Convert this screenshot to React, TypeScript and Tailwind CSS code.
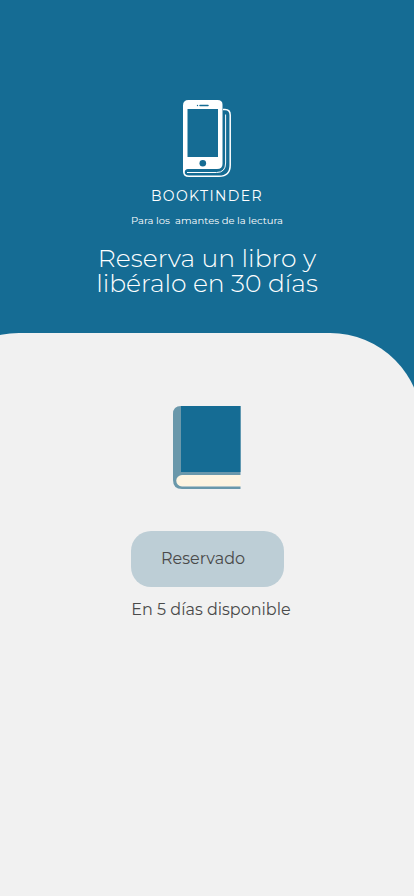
function PhoneBookLogo() {
  return (
    <svg className="h-20 w-12" viewBox="0 0 48 80" fill="none" aria-hidden="true">
      <path d="M40 9.500H42Q47.200 9.500 47.200 15V65Q47.200 76.300 36 76.300H6Q.8 76.300 .8 71.500" stroke="#fff" strokeWidth="1.500" />
      <path d="M42.600 14.500V63Q42.600 72.500 33.500 72.500H4" stroke="#fff" strokeWidth="1" />
      <path fillRule="evenodd" fill="#fff" d="M5.500 0H34.500Q39.500 0 39.500 4.500V64Q39.500 69 34 69H5Q1.800 69 1.600 72.500H0V5.500Q0 0 5.500 0ZM4.500 9V57H35V9Z" />
      <path d="M17 5.500H25" stroke="#156c94" strokeWidth="1.500" strokeLinecap="round" />
      <circle cx="14.500" cy="5.500" r=".7" fill="#156c94" />
      <circle cx="19.800" cy="63.200" r="3.300" fill="#156c94" />
    </svg>
  );
}

function BookIcon() {
  return (
    <svg className="h-[83px] w-[68px]" viewBox="0 0 68 83" fill="none" aria-hidden="true">
      <path d="M8 0H67.500V69H9V83Q0 83 0 74V8Q0 0 8 0Z" fill="#6a98ab" />
      <path d="M8 0H67.500V66H8Z" fill="#156c94" />
      <path d="M67.500 69H9A5.700 5.700 0 0 0 9 80.500H67.500Z" fill="#fdf4e1" />
      <path d="M9 80.500H67.500V83H9Z" fill="#6a98ab" />
    </svg>
  );
}

export default function App() {
  return (
    <main className="flex min-h-screen flex-col overflow-hidden bg-[#156c94] font-['Montserrat','Inter',sans-serif]">
      <header className="flex flex-col items-center pt-[100px] pb-[37px] text-center text-white">
        <PhoneBookLogo />
        <p className="mt-2 text-sm leading-4 tracking-widest">BOOKTINDER</p>
        <p className="mt-[9px] text-[10px] leading-4 whitespace-pre">{"Para los  amantes de la lectura"}</p>
        <h1 className="mt-[17px] text-[25px] leading-[25px] font-light">
          Reserva un libro y
          <br />
          libéralo en 30 días
        </h1>
      </header>
      <section className="-mr-2 -ml-[73px] flex grow flex-col items-center rounded-t-[92px] bg-[#f1f1f1] pt-[73px] pr-2 pl-[73px] text-[#4a4a4a]">
        <BookIcon />
        <button
          type="button"
          className="mt-[42px] h-14 w-[153px] rounded-[20px] bg-[#bdced6] pr-2 text-base"
        >
          Reservado
        </button>
        <p className="mt-[13px] ml-2 text-base leading-5">En 5 días disponible</p>
      </section>
    </main>
  );
}
